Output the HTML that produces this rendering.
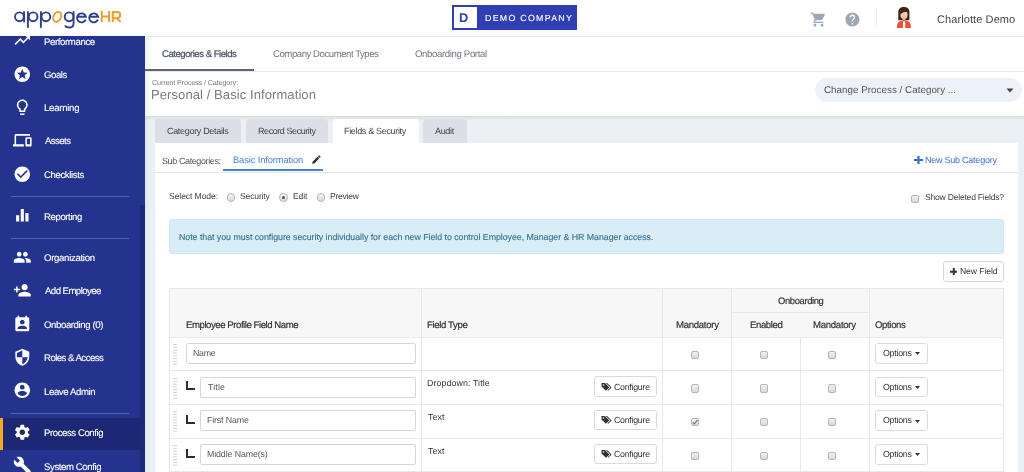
<!DOCTYPE html>
<html><head><meta charset="utf-8"><style>
html,body{margin:0;padding:0;width:1024px;height:472px;overflow:hidden;background:#fff;position:relative;font-family:"Liberation Sans", sans-serif;}
.t{position:absolute;white-space:nowrap;font-family:"Liberation Sans", sans-serif;text-rendering:geometricPrecision;will-change:transform;}
svg{display:block;}
</style></head><body>
<div style="position:absolute;left:0px;top:36px;width:145px;height:436px;background:#24348e;"></div>
<div style="position:absolute;left:140px;top:205px;width:5px;height:267px;background:#1c2a79;"></div>
<div style="position:absolute;left:0px;top:417.5px;width:140px;height:32.5px;background:#1c2873;"></div>
<div style="position:absolute;left:0px;top:417.5px;width:3px;height:32.5px;background:#f5a623;"></div>
<div style="position:absolute;left:11px;top:196px;width:118px;height:1px;background:#5263ad;"></div>
<div style="position:absolute;left:11px;top:238px;width:118px;height:1px;background:#5263ad;"></div>
<div style="position:absolute;left:11px;top:413px;width:118px;height:1px;background:#5263ad;"></div>
<svg style="position:absolute;left:13px;top:31.400000000000002px;" width="18.6" height="18.6" viewBox="0 0 24 24"><path fill="#fff" d="M16 6l2.29 2.29-4.88 4.88-4-4L2 16.59 3.41 18l6-6 4 4 6.3-6.29L22 12V6z"/></svg>
<div class="t" style="left:43.93px;top:37.75px;font-size:9.6px;line-height:9.6px;color:#fff;font-weight:400;letter-spacing:-0.376px;-webkit-text-stroke:0.12px #fff;">Performance</div>
<svg style="position:absolute;left:13px;top:64.5px;" width="18.6" height="18.6" viewBox="0 0 24 24"><path fill="#fff" d="M11.99 2C6.47 2 2 6.48 2 12s4.47 10 9.99 10C17.52 22 22 17.52 22 12S17.52 2 11.99 2zm4.24 16L12 15.45 7.77 18l1.12-4.81-3.73-3.23 4.92-.42L12 5l1.92 4.53 4.92.42-3.73 3.23L16.23 18z"/></svg>
<div class="t" style="left:44.22px;top:70.85px;font-size:9.6px;line-height:9.6px;color:#fff;font-weight:400;letter-spacing:-0.435px;-webkit-text-stroke:0.12px #fff;">Goals</div>
<svg style="position:absolute;left:13px;top:98.0px;" width="18.6" height="18.6" viewBox="0 0 24 24"><path fill="#fff" d="M9 21c0 .55.45 1 1 1h4c.55 0 1-.45 1-1v-1H9v1zm3-19C8.14 2 5 5.14 5 9c0 2.38 1.19 4.47 3 5.74V17c0 .55.45 1 1 1h6c.55 0 1-.45 1-1v-2.26c1.81-1.27 3-3.36 3-5.74 0-3.86-3.14-7-7-7zm2.85 11.1l-.85.6V16h-4v-2.3l-.85-.6C7.8 12.16 7 10.63 7 9c0-2.76 2.24-5 5-5s5 2.24 5 5c0 1.63-.8 3.16-2.15 4.1z"/></svg>
<div class="t" style="left:43.93px;top:104.35px;font-size:9.6px;line-height:9.6px;color:#fff;font-weight:400;letter-spacing:-0.265px;-webkit-text-stroke:0.12px #fff;">Learning</div>
<svg style="position:absolute;left:13px;top:131.0px;" width="18.6" height="18.6" viewBox="0 0 24 24"><path fill="#fff" d="M4 6h18V4H4c-1.1 0-2 .9-2 2v11H0v3h14v-3H4V6zm19 2h-6c-.55 0-1 .45-1 1v10c0 .55.45 1 1 1h6c.55 0 1-.45 1-1V9c0-.55-.45-1-1-1zm-1 9h-4v-7h4v7z"/></svg>
<div class="t" style="left:44.70px;top:137.35px;font-size:9.6px;line-height:9.6px;color:#fff;font-weight:400;letter-spacing:-0.573px;-webkit-text-stroke:0.12px #fff;">Assets</div>
<svg style="position:absolute;left:13px;top:164.5px;" width="18.6" height="18.6" viewBox="0 0 24 24"><path fill="#fff" d="M12 2C6.48 2 2 6.48 2 12s4.48 10 10 10 10-4.48 10-10S17.52 2 12 2zm-2 15l-5-5 1.41-1.41L10 14.17l7.59-7.59L19 8l-9 9z"/></svg>
<div class="t" style="left:44.22px;top:170.85px;font-size:9.6px;line-height:9.6px;color:#fff;font-weight:400;letter-spacing:-0.390px;-webkit-text-stroke:0.12px #fff;">Checklists</div>
<svg style="position:absolute;left:13px;top:206.2px;" width="18.6" height="18.6" viewBox="0 0 24 24"><path fill="#fff" d="M10 20h4V4h-4v16zm-6 0h4v-8H4v8zM16 9v11h4V9h-4z"/></svg>
<div class="t" style="left:43.93px;top:212.55px;font-size:9.6px;line-height:9.6px;color:#fff;font-weight:400;letter-spacing:-0.403px;-webkit-text-stroke:0.12px #fff;">Reporting</div>
<svg style="position:absolute;left:13px;top:247.7px;" width="18.6" height="18.6" viewBox="0 0 24 24"><path fill="#fff" d="M16 11c1.66 0 2.99-1.34 2.99-3S17.66 5 16 5c-1.66 0-3 1.34-3 3s1.34 3 3 3zm-8 0c1.66 0 2.99-1.34 2.99-3S9.66 5 8 5C6.34 5 5 6.34 5 8s1.34 3 3 3zm0 2c-2.33 0-7 1.17-7 3.5V19h14v-2.5c0-2.33-4.67-3.5-7-3.5zm8 0c-.29 0-.62.02-.97.05 1.16.84 1.97 1.97 1.97 3.45V19h6v-2.5c0-2.33-4.67-3.5-7-3.5z"/></svg>
<div class="t" style="left:44.27px;top:254.05px;font-size:9.6px;line-height:9.6px;color:#fff;font-weight:400;letter-spacing:-0.307px;-webkit-text-stroke:0.12px #fff;">Organization</div>
<svg style="position:absolute;left:13px;top:281.0px;" width="18.6" height="18.6" viewBox="0 0 24 24"><path fill="#fff" d="M15 12c2.21 0 4-1.79 4-4s-1.79-4-4-4-4 1.79-4 4 1.79 4 4 4zm-9-2V7H4v3H1v2h3v3h2v-3h3v-2H6zm9 4c-2.67 0-8 1.34-8 4v2h16v-2c0-2.66-5.33-4-8-4z"/></svg>
<div class="t" style="left:44.70px;top:287.35px;font-size:9.6px;line-height:9.6px;color:#fff;font-weight:400;letter-spacing:-0.547px;-webkit-text-stroke:0.12px #fff;">Add Employee</div>
<svg style="position:absolute;left:13px;top:314.5px;" width="18.6" height="18.6" viewBox="0 0 24 24"><path fill="#fff" d="M19 3h-1V1h-2v2H8V1H6v2H5c-1.11 0-2 .9-2 2v14c0 1.1.89 2 2 2h14c1.1 0 2-.9 2-2V5c0-1.1-.9-2-2-2zm-7 3c1.66 0 3 1.34 3 3s-1.34 3-3 3-3-1.34-3-3 1.34-3 3-3zm6 12H6v-1c0-2 4-3.1 6-3.1s6 1.1 6 3.1v1z"/></svg>
<div class="t" style="left:44.27px;top:320.85px;font-size:9.6px;line-height:9.6px;color:#fff;font-weight:400;letter-spacing:-0.396px;-webkit-text-stroke:0.12px #fff;">Onboarding (0)</div>
<svg style="position:absolute;left:13px;top:347.8px;" width="18.6" height="18.6" viewBox="0 0 24 24"><path fill="#fff" d="M12 1L3 5v6c0 5.55 3.84 10.74 9 12 5.16-1.26 9-6.45 9-12V5l-9-4zm0 10.99h7c-.53 4.12-3.28 7.79-7 8.94V12H5V6.3l7-3.11v8.8z"/></svg>
<div class="t" style="left:43.93px;top:354.15px;font-size:9.6px;line-height:9.6px;color:#fff;font-weight:400;letter-spacing:-0.528px;-webkit-text-stroke:0.12px #fff;">Roles &amp; Access</div>
<svg style="position:absolute;left:13px;top:381.3px;" width="18.6" height="18.6" viewBox="0 0 24 24"><path fill="#fff" d="M12 2C6.48 2 2 6.48 2 12s4.48 10 10 10 10-4.48 10-10S17.52 2 12 2zm0 3c1.66 0 3 1.34 3 3s-1.34 3-3 3-3-1.34-3-3 1.34-3 3-3zm0 14.2c-2.5 0-4.71-1.28-6-3.22.03-1.99 4-3.08 6-3.08 1.99 0 5.97 1.09 6 3.080-1.29 1.94-3.5 3.22-6 3.22z"/></svg>
<div class="t" style="left:43.93px;top:387.65px;font-size:9.6px;line-height:9.6px;color:#fff;font-weight:400;letter-spacing:-0.380px;-webkit-text-stroke:0.12px #fff;">Leave Admin</div>
<svg style="position:absolute;left:13px;top:422.8px;" width="18.6" height="18.6" viewBox="0 0 24 24"><path fill="#fff" d="M19.14 12.94c.04-.3.06-.61.06-.94 0-.32-.02-.64-.07-.94l2.03-1.58c.18-.14.23-.41.12-.61l-1.92-3.32c-.12-.22-.37-.29-.59-.22l-2.39.96c-.5-.38-1.03-.7-1.62-.94l-.36-2.54c-.04-.24-.24-.41-.48-.41h-3.84c-.24 0-.43.17-.47.41l-.36 2.54c-.59.24-1.13.57-1.62.94l-2.39-.96c-.22-.08-.47 0-.59.22L2.74 8.87c-.12.21-.08.47.12.61l2.03 1.58c-.05.3-.09.63-.09.94s.02.64.07.94l-2.03 1.58c-.18.14-.23.41-.12.61l1.92 3.32c.12.22.37.29.59.22l2.39-.96c.5.38 1.03.7 1.62.94l.36 2.54c.05.24.24.41.48.41h3.84c.24 0 .44-.17.47-.41l.36-2.54c.59-.24 1.13-.56 1.62-.94l2.39.96c.22.08.47 0 .59-.22l1.92-3.32c.12-.22.07-.47-.12-.61l-2.01-1.58zM12 15.6c-1.98 0-3.6-1.62-3.6-3.6s1.62-3.6 3.6-3.6 3.6 1.62 3.6 3.6-1.62 3.6-3.6 3.6z"/></svg>
<div class="t" style="left:43.93px;top:429.15px;font-size:9.6px;line-height:9.6px;color:#fff;font-weight:400;letter-spacing:-0.423px;-webkit-text-stroke:0.12px #fff;">Process Config</div>
<svg style="position:absolute;left:13px;top:456.2px;" width="18.6" height="18.6" viewBox="0 0 24 24"><path fill="#fff" d="M22.7 19l-9.1-9.1c.9-2.3.4-5-1.5-6.9-2-2-5-2.4-7.4-1.3L9 6 6 9 1.6 4.7C.4 7.1.9 10.1 2.9 12.1c1.9 1.9 4.6 2.4 6.9 1.5l9.1 9.1c.4.4 1 .4 1.4 0l2.3-2.3c.5-.4.5-1.1.1-1.4z"/></svg>
<div class="t" style="left:44.27px;top:462.55px;font-size:9.6px;line-height:9.6px;color:#fff;font-weight:400;letter-spacing:-0.404px;-webkit-text-stroke:0.12px #fff;">System Config</div>
<div style="position:absolute;left:0px;top:0px;width:1024px;height:36px;background:#fff;"></div>
<div style="position:absolute;left:145px;top:36px;width:879px;height:1px;background:#dfe5ee;"></div>
<div style="position:absolute;left:0px;top:30px;width:1024px;height:6px;background:linear-gradient(rgba(0,0,0,0),rgba(0,0,0,0.025));"></div>
<svg style="position:absolute;left:0px;top:0px;" width="130" height="36" viewBox="0 0 130 36">
<g fill="none" stroke="#2e3f8f" stroke-width="1.9">
<circle cx="19.45" cy="16.8" r="4.4"/><line x1="24.1" y1="11.3" x2="24.1" y2="22.4"/>
<circle cx="33.1" cy="16.8" r="4.4"/><line x1="27.9" y1="11.3" x2="27.9" y2="27.8"/>
<circle cx="45.9" cy="16.8" r="4.4"/><line x1="40.9" y1="11.3" x2="40.9" y2="27.8"/>
<circle cx="69.1" cy="16.8" r="4.4"/><path d="M73.6 11.3V23.2c0 3-1.9 4.3-4.5 4.3-2 0-3.4-.8-4.2-2.1"/>
<path d="M85.7 19.6a4.5 4.5 0 1 1 .2-2.8H77"/>
<path d="M97.9 19.6a4.5 4.5 0 1 1 .2-2.8H89.2"/>
</g>
<ellipse cx="57.2" cy="16.9" rx="3.7" ry="5.2" transform="rotate(28 57.2 16.9)" fill="none" stroke="#f39a2b" stroke-width="1.9"/>
</svg>
<svg style="position:absolute;left:0px;top:0px;" width="130" height="36" viewBox="0 0 130 36"><g fill="none" stroke="#f39a2b" stroke-width="2.0">
<path d="M101.7 11.05V21.9M109.1 11.05V21.9M101.7 16.5H109.1"/>
<path d="M112.8 21.9V12.05H116.9c2.1 0 3.3 1.3 3.3 3.05s-1.2 3.05-3.3 3.05H112.8M116.8 18.1L120.6 21.9"/>
</g></svg>
<div style="position:absolute;left:452px;top:5px;width:125px;height:25px;background:#2f3eb3;"></div>
<div style="position:absolute;left:453.5px;top:6.8px;width:23.5px;height:21.5px;background:#fff;"></div>
<div class="t" style="left:459.37px;top:12.01px;font-size:12.8px;line-height:12.8px;color:#2f3eb3;font-weight:700;letter-spacing:0.000px;">D</div>
<div class="t" style="left:485.00px;top:14.35px;font-size:8.8px;line-height:8.8px;color:#fff;font-weight:400;letter-spacing:1.290px;-webkit-text-stroke:0.12px #fff;">DEMO COMPANY</div>
<svg style="position:absolute;left:810.3px;top:10.6px;" width="17" height="17" viewBox="0 0 24 24"><path fill="#9ea8b5" d="M7 18c-1.1 0-1.99.9-1.99 2S5.9 22 7 22s2-.9 2-2-.9-2-2-2zM1 2v2h2l3.6 7.59-1.35 2.45c-.16.28-.25.61-.25.96 0 1.1.9 2 2 2h12v-2H7.42c-.14 0-.25-.11-.25-.25l.03-.12.9-1.63h7.45c.75 0 1.41-.41 1.75-1.03l3.58-6.49c.08-.14.12-.31.12-.48 0-.55-.45-1-1-1H5.21l-.94-2H1zm16 16c-1.1 0-1.99.9-1.99 2s.89 2 1.99 2 2-.9 2-2-.9-2-2-2z"/></svg>
<svg style="position:absolute;left:843.6px;top:11.2px;" width="16.8" height="16.8" viewBox="0 0 24 24"><path fill="#9ea8b5" d="M12 2C6.48 2 2 6.48 2 12s4.48 10 10 10 10-4.48 10-10S17.52 2 12 2zm1 17h-2v-2h2v2zm2.07-7.75l-.9.92C13.45 12.9 13 13.5 13 15h-2v-.5c0-1.1.45-2.1 1.17-2.83l1.24-1.26c.37-.36.59-.86.59-1.41 0-1.1-.9-2-2-2s-2 .9-2 2H8c0-2.21 1.79-4 4-4s4 1.79 4 4c0 .88-.36 1.68-.93 2.25z"/></svg>
<div style="position:absolute;left:876px;top:8px;width:1px;height:20px;background:#eef1f4;"></div>
<svg style="position:absolute;left:890px;top:3px;" width="30" height="29" viewBox="890 3 30 29">
<path d="M898.3 20.2V12.2C898.3 8.6 900.6 7 903.9 7S909.4 8.6 909.4 12.2V20.2Z" fill="#3d2318"/>
<ellipse cx="904" cy="14.8" rx="3.6" ry="4.3" fill="#f3c6ae"/>
<path d="M900.2 13.2C901 9.9 904 9.1 908.2 10.8L908.3 11.8C905.5 12 902.5 11.6 900.6 14.6Z" fill="#3d2318"/>
<rect x="902.7" y="18" width="2.6" height="3.2" fill="#e9b39a"/>
<path d="M896.8 28C896.8 22.6 898.8 20.6 904 20.2 909.2 20.6 910.9 22.6 910.9 28Z" fill="#e8533a"/>
<path d="M903 21.5h2.2V28H903Z" fill="#fff"/>
</svg>
<div class="t" style="left:936.65px;top:15.25px;font-size:11.0px;line-height:11.0px;color:#444;font-weight:400;letter-spacing:0.092px;">Charlotte Demo</div>
<div style="position:absolute;left:145px;top:37px;width:879px;height:35px;background:#fff;"></div>
<div style="position:absolute;left:145px;top:37px;width:8px;height:79px;background:linear-gradient(90deg,rgba(0,0,0,0.05),rgba(0,0,0,0));"></div>
<div class="t" style="left:162.22px;top:50.45px;font-size:9.6px;line-height:9.6px;color:#4b5567;font-weight:400;letter-spacing:-0.491px;-webkit-text-stroke:0.25px #4b5567;">Categories &amp; Fields</div>
<div class="t" style="left:272.92px;top:50.45px;font-size:9.6px;line-height:9.6px;color:#6f7580;font-weight:400;letter-spacing:-0.458px;">Company Document Types</div>
<div class="t" style="left:415.17px;top:50.45px;font-size:9.6px;line-height:9.6px;color:#6f7580;font-weight:400;letter-spacing:-0.359px;">Onboarding Portal</div>
<div style="position:absolute;left:145px;top:69.3px;width:109px;height:2px;background:#5b6478;"></div>
<div style="position:absolute;left:145px;top:71.3px;width:879px;height:1px;background:#e4e8ed;"></div>
<div class="t" style="left:151.64px;top:79.27px;font-size:7.2px;line-height:7.2px;color:#777;font-weight:400;letter-spacing:-0.123px;">Current Process / Category:</div>
<div class="t" style="left:150.96px;top:87.93px;font-size:13.0px;line-height:13.0px;color:#7b7b7b;font-weight:400;letter-spacing:0.086px;">Personal / Basic Information</div>
<div style="position:absolute;left:815px;top:78.3px;width:207px;height:24px;background:#edf1f8;border-radius:12px;"></div>
<div class="t" style="left:824.21px;top:86.13px;font-size:9.8px;line-height:9.8px;color:#555;font-weight:400;letter-spacing:0.029px;">Change Process / Category ...</div>
<svg style="position:absolute;left:1006px;top:88px;" width="8" height="5" viewBox="0 0 8 5"><path d="M0.5 0.5h7l-3.5 4z" fill="#444"/></svg>
<div style="position:absolute;left:145px;top:116px;width:879px;height:356px;background:#eaf0f3;"></div>
<div style="position:absolute;left:145px;top:116px;width:879px;height:5px;background:linear-gradient(#d5dde1,#dfe6e9 35%,#eaf0f3);"></div>
<div style="position:absolute;left:145px;top:116px;width:6px;height:356px;background:linear-gradient(90deg,rgba(0,0,0,0.04),rgba(0,0,0,0));"></div>
<div style="position:absolute;left:155px;top:119px;width:86px;height:24px;background:#dcdfe5;border-radius:4px 4px 0 0;"></div>
<div class="t" style="left:167.25px;top:127.34px;font-size:9.0px;line-height:9.0px;color:#444;font-weight:400;letter-spacing:-0.316px;">Category Details</div>
<div style="position:absolute;left:246px;top:119px;width:82px;height:24px;background:#dcdfe5;border-radius:4px 4px 0 0;"></div>
<div class="t" style="left:257.88px;top:127.34px;font-size:9.0px;line-height:9.0px;color:#444;font-weight:400;letter-spacing:-0.430px;">Record Security</div>
<div style="position:absolute;left:332.5px;top:119px;width:86.5px;height:24px;background:#fff;border-radius:4px 4px 0 0;"></div>
<div class="t" style="left:343.98px;top:127.34px;font-size:9.0px;line-height:9.0px;color:#444;font-weight:400;letter-spacing:-0.327px;">Fields &amp; Security</div>
<div style="position:absolute;left:423px;top:119px;width:44px;height:24px;background:#dcdfe5;border-radius:4px 4px 0 0;"></div>
<div class="t" style="left:435.00px;top:127.34px;font-size:9.0px;line-height:9.0px;color:#444;font-weight:400;letter-spacing:-0.332px;">Audit</div>
<div style="position:absolute;left:155px;top:143px;width:863px;height:329px;background:#fff;"></div>
<div class="t" style="left:162.00px;top:156.64px;font-size:9.0px;line-height:9.0px;color:#555;font-weight:400;letter-spacing:-0.394px;">Sub Categories:</div>
<div class="t" style="left:232.96px;top:156.14px;font-size:9.3px;line-height:9.3px;color:#3f80d8;font-weight:400;letter-spacing:-0.106px;">Basic Information</div>
<svg style="position:absolute;left:310.5px;top:154px;" width="11" height="11" viewBox="0 0 24 24"><path fill="#333" d="M3 17.25V21h3.75L17.81 9.94l-3.75-3.75L3 17.25zM20.71 7.04c.39-.39.39-1.02 0-1.41l-2.34-2.34c-.39-.39-1.02-.39-1.41 0l-1.83 1.83 3.75 3.75 1.83-1.83z"/></svg>
<div style="position:absolute;left:223px;top:169.3px;width:100px;height:2px;background:#3f82d6;"></div>
<svg style="position:absolute;left:914px;top:156px;" width="9" height="8" viewBox="0 0 9 8"><path d="M3.4 0h2.2v2.9H9v2.2H5.6V8H3.4V5.1H0V2.9h3.4z" fill="#3b6fd4"/></svg>
<div class="t" style="left:925.18px;top:155.94px;font-size:9.0px;line-height:9.0px;color:#3b6fd4;font-weight:400;letter-spacing:-0.242px;">New Sub Category</div>
<div style="position:absolute;left:155px;top:172px;width:863px;height:1px;background:#e6e6e6;"></div>
<div class="t" style="left:168.61px;top:191.97px;font-size:8.6px;line-height:8.6px;color:#444;font-weight:400;letter-spacing:-0.093px;">Select Mode:</div>
<div style="position:absolute;left:226.5px;top:193.4px;width:8.4px;height:8.4px;box-sizing:border-box;border:1px solid #b5b5b5;border-radius:50%;background:linear-gradient(#f4f4f4,#dcdcdc);"></div>
<div style="position:absolute;left:279.3px;top:193.4px;width:8.4px;height:8.4px;box-sizing:border-box;border:1px solid #b5b5b5;border-radius:50%;background:linear-gradient(#f4f4f4,#dcdcdc);"></div>
<div style="position:absolute;left:281.7px;top:195.79999999999998px;width:3.6px;height:3.6px;background:#555;border-radius:50%;"></div>
<div style="position:absolute;left:316.6px;top:193.4px;width:8.4px;height:8.4px;box-sizing:border-box;border:1px solid #b5b5b5;border-radius:50%;background:linear-gradient(#f4f4f4,#dcdcdc);"></div>
<div class="t" style="left:240.11px;top:192.07px;font-size:8.6px;line-height:8.6px;color:#444;font-weight:400;letter-spacing:-0.166px;">Security</div>
<div class="t" style="left:292.51px;top:192.07px;font-size:8.6px;line-height:8.6px;color:#444;font-weight:400;letter-spacing:-0.154px;">Edit</div>
<div class="t" style="left:329.81px;top:192.07px;font-size:8.6px;line-height:8.6px;color:#444;font-weight:400;letter-spacing:-0.271px;">Preview</div>
<div style="position:absolute;left:911.3px;top:195.0px;width:8.2px;height:8.2px;box-sizing:border-box;border:1px solid #b5b5b5;border-radius:2px;background:linear-gradient(#f0f0f0,#d9d9d9);"></div>
<div class="t" style="left:925.11px;top:193.47px;font-size:8.6px;line-height:8.6px;color:#444;font-weight:400;letter-spacing:-0.234px;">Show Deleted Fields?</div>
<div style="position:absolute;left:169px;top:219.3px;width:835px;height:34.7px;box-sizing:border-box;background:#d9edf7;border:1px solid #cfe7f3;border-radius:3px;"></div>
<div class="t" style="left:179.10px;top:233.15px;font-size:8.8px;line-height:8.8px;color:#31708f;font-weight:400;letter-spacing:-0.028px;-webkit-text-stroke:0.1px #31708f;">Note that you must configure security individually for each new Field to control Employee, Manager &amp; HR Manager access.</div>
<div style="position:absolute;left:942.5px;top:261.4px;width:61.1px;height:20.4px;box-sizing:border-box;border:1px solid #d5d5d5;border-radius:3px;background:#fff;"></div>
<svg style="position:absolute;left:949.7px;top:267.5px;" width="7.6" height="7.4" viewBox="0 0 7.6 7.4"><path d="M2.8 0h2v2.7h2.8v2H4.8v2.7h-2V4.7H0v-2h2.8z" fill="#333"/></svg>
<div class="t" style="left:960.21px;top:267.27px;font-size:8.6px;line-height:8.6px;color:#333;font-weight:400;letter-spacing:-0.085px;">New Field</div>
<div style="position:absolute;left:169px;top:288px;width:835px;height:184px;box-sizing:border-box;border:1px solid #e8e8e8;border-bottom:none;background:#fff;"></div>
<div style="position:absolute;left:170px;top:289px;width:833px;height:48px;background:#f7f7f7;"></div>
<div style="position:absolute;left:421px;top:288px;width:1px;height:184px;background:#e8e8e8;"></div>
<div style="position:absolute;left:662px;top:288px;width:1px;height:184px;background:#e8e8e8;"></div>
<div style="position:absolute;left:731px;top:288px;width:1px;height:184px;background:#e8e8e8;"></div>
<div style="position:absolute;left:869px;top:288px;width:1px;height:184px;background:#e8e8e8;"></div>
<div style="position:absolute;left:800px;top:337px;width:1px;height:135px;background:#e8e8e8;"></div>
<div style="position:absolute;left:731px;top:312px;width:138px;height:1px;background:#e8e8e8;"></div>
<div style="position:absolute;left:169px;top:337px;width:835px;height:1px;background:#e8e8e8;"></div>
<div style="position:absolute;left:169px;top:370px;width:835px;height:1px;background:#e8e8e8;"></div>
<div style="position:absolute;left:169px;top:404px;width:835px;height:1px;background:#e8e8e8;"></div>
<div style="position:absolute;left:169px;top:438px;width:835px;height:1px;background:#e8e8e8;"></div>
<div style="position:absolute;left:169px;top:471px;width:835px;height:1px;background:#e8e8e8;"></div>
<div class="t" style="left:185.73px;top:320.95px;font-size:9.6px;line-height:9.6px;color:#333;font-weight:400;letter-spacing:-0.447px;-webkit-text-stroke:0.2px #333;">Employee Profile Field Name</div>
<div class="t" style="left:427.43px;top:320.95px;font-size:9.6px;line-height:9.6px;color:#333;font-weight:400;letter-spacing:-0.368px;-webkit-text-stroke:0.2px #333;">Field Type</div>
<div class="t" style="left:675.83px;top:320.95px;font-size:9.6px;line-height:9.6px;color:#333;font-weight:400;letter-spacing:-0.299px;-webkit-text-stroke:0.2px #333;">Mandatory</div>
<div class="t" style="left:749.73px;top:320.95px;font-size:9.6px;line-height:9.6px;color:#333;font-weight:400;letter-spacing:-0.407px;-webkit-text-stroke:0.2px #333;">Enabled</div>
<div class="t" style="left:813.23px;top:320.95px;font-size:9.6px;line-height:9.6px;color:#333;font-weight:400;letter-spacing:-0.286px;-webkit-text-stroke:0.2px #333;">Mandatory</div>
<div class="t" style="left:875.47px;top:320.95px;font-size:9.6px;line-height:9.6px;color:#333;font-weight:400;letter-spacing:-0.367px;-webkit-text-stroke:0.2px #333;">Options</div>
<div class="t" style="left:777.88px;top:295.83px;font-size:9.4px;line-height:9.4px;color:#333;font-weight:400;letter-spacing:-0.353px;-webkit-text-stroke:0.2px #333;">Onboarding</div>
<svg style="position:absolute;left:173px;top:343.9px;" width="4" height="22" viewBox="0 0 4 22"><rect x="0" y="0.00" width="4" height="1.1" fill="#d4d4d4"/><rect x="0" y="2.80" width="4" height="1.1" fill="#d4d4d4"/><rect x="0" y="5.60" width="4" height="1.1" fill="#d4d4d4"/><rect x="0" y="8.40" width="4" height="1.1" fill="#d4d4d4"/><rect x="0" y="11.20" width="4" height="1.1" fill="#d4d4d4"/><rect x="0" y="14.00" width="4" height="1.1" fill="#d4d4d4"/><rect x="0" y="16.80" width="4" height="1.1" fill="#d4d4d4"/><rect x="0" y="19.60" width="4" height="1.1" fill="#d4d4d4"/></svg>
<div style="position:absolute;left:186px;top:343px;width:229.5px;height:21.19999999999999px;box-sizing:border-box;border:1px solid #d6d6d6;border-radius:2px;background:#fff;"></div>
<div class="t" style="left:193.00px;top:348.95px;font-size:8.8px;line-height:8.8px;color:#555;font-weight:400;letter-spacing:-0.251px;">Name</div>
<div style="position:absolute;left:690.8px;top:350.7px;width:8.2px;height:8.2px;box-sizing:border-box;border:1px solid #b5b5b5;border-radius:2px;background:linear-gradient(#f0f0f0,#d9d9d9);"></div>
<div style="position:absolute;left:759.5px;top:350.7px;width:8.2px;height:8.2px;box-sizing:border-box;border:1px solid #b5b5b5;border-radius:2px;background:linear-gradient(#f0f0f0,#d9d9d9);"></div>
<div style="position:absolute;left:828.3px;top:350.7px;width:8.2px;height:8.2px;box-sizing:border-box;border:1px solid #b5b5b5;border-radius:2px;background:linear-gradient(#f0f0f0,#d9d9d9);"></div>
<div style="position:absolute;left:875.3px;top:343px;width:52.5px;height:20.80000000000001px;box-sizing:border-box;border:1px solid #dadada;border-radius:3px;background:#fff;"></div>
<div class="t" style="left:882.90px;top:348.95px;font-size:8.8px;line-height:8.8px;color:#333;font-weight:400;letter-spacing:-0.235px;">Options</div>
<svg style="position:absolute;left:914.8px;top:352.2px;" width="5.0" height="3.0" viewBox="0 0 5.5 3.2"><path d="M0 0h5.5L2.75 3.2z" fill="#333"/></svg>
<svg style="position:absolute;left:173px;top:377.59999999999997px;" width="4" height="22" viewBox="0 0 4 22"><rect x="0" y="0.00" width="4" height="1.1" fill="#d4d4d4"/><rect x="0" y="2.80" width="4" height="1.1" fill="#d4d4d4"/><rect x="0" y="5.60" width="4" height="1.1" fill="#d4d4d4"/><rect x="0" y="8.40" width="4" height="1.1" fill="#d4d4d4"/><rect x="0" y="11.20" width="4" height="1.1" fill="#d4d4d4"/><rect x="0" y="14.00" width="4" height="1.1" fill="#d4d4d4"/><rect x="0" y="16.80" width="4" height="1.1" fill="#d4d4d4"/><rect x="0" y="19.60" width="4" height="1.1" fill="#d4d4d4"/></svg>
<div style="position:absolute;left:186px;top:381.4px;width:7.3px;height:7px;border-left:2px solid #2e2e2e;border-bottom:2px solid #2e2e2e;"></div>
<div style="position:absolute;left:200px;top:376.7px;width:215.5px;height:21.19999999999999px;box-sizing:border-box;border:1px solid #d6d6d6;border-radius:2px;background:#fff;"></div>
<div class="t" style="left:207.52px;top:382.65px;font-size:8.8px;line-height:8.8px;color:#555;font-weight:400;letter-spacing:0.148px;">Title</div>
<div class="t" style="left:427.10px;top:379.45px;font-size:8.8px;line-height:8.8px;color:#333;font-weight:400;letter-spacing:0.113px;">Dropdown: Title</div>
<div style="position:absolute;left:594.1px;top:376.4px;width:62.60000000000002px;height:20.30000000000001px;box-sizing:border-box;border:1px solid #dadada;border-radius:3px;background:#fff;"></div>
<svg style="position:absolute;left:601.2px;top:381.59999999999997px;" width="11.2" height="10.2" viewBox="0 0 10 10"><path d="M0 1v3.3l4.4 4.4 3.3-3.3L3.3 1z" fill="#333"/><circle cx="1.9" cy="2.9" r="0.8" fill="#fff"/><path d="M4.3 1h1.2l4.4 4.4-3.3 3.3-.6-.6 2.7-2.7z" fill="#333"/></svg>
<div class="t" style="left:614.16px;top:382.75px;font-size:8.8px;line-height:8.8px;color:#333;font-weight:400;letter-spacing:-0.264px;">Configure</div>
<div style="position:absolute;left:690.8px;top:384.4px;width:8.2px;height:8.2px;box-sizing:border-box;border:1px solid #b5b5b5;border-radius:2px;background:linear-gradient(#f0f0f0,#d9d9d9);"></div>
<div style="position:absolute;left:759.5px;top:384.4px;width:8.2px;height:8.2px;box-sizing:border-box;border:1px solid #b5b5b5;border-radius:2px;background:linear-gradient(#f0f0f0,#d9d9d9);"></div>
<div style="position:absolute;left:828.3px;top:384.4px;width:8.2px;height:8.2px;box-sizing:border-box;border:1px solid #b5b5b5;border-radius:2px;background:linear-gradient(#f0f0f0,#d9d9d9);"></div>
<div style="position:absolute;left:875.3px;top:376.7px;width:52.5px;height:20.80000000000001px;box-sizing:border-box;border:1px solid #dadada;border-radius:3px;background:#fff;"></div>
<div class="t" style="left:882.90px;top:382.65px;font-size:8.8px;line-height:8.8px;color:#333;font-weight:400;letter-spacing:-0.235px;">Options</div>
<svg style="position:absolute;left:914.8px;top:385.9px;" width="5.0" height="3.0" viewBox="0 0 5.5 3.2"><path d="M0 0h5.5L2.75 3.2z" fill="#333"/></svg>
<svg style="position:absolute;left:173px;top:411.2px;" width="4" height="22" viewBox="0 0 4 22"><rect x="0" y="0.00" width="4" height="1.1" fill="#d4d4d4"/><rect x="0" y="2.80" width="4" height="1.1" fill="#d4d4d4"/><rect x="0" y="5.60" width="4" height="1.1" fill="#d4d4d4"/><rect x="0" y="8.40" width="4" height="1.1" fill="#d4d4d4"/><rect x="0" y="11.20" width="4" height="1.1" fill="#d4d4d4"/><rect x="0" y="14.00" width="4" height="1.1" fill="#d4d4d4"/><rect x="0" y="16.80" width="4" height="1.1" fill="#d4d4d4"/><rect x="0" y="19.60" width="4" height="1.1" fill="#d4d4d4"/></svg>
<div style="position:absolute;left:186px;top:415.0px;width:7.3px;height:7px;border-left:2px solid #2e2e2e;border-bottom:2px solid #2e2e2e;"></div>
<div style="position:absolute;left:200px;top:410.3px;width:215.5px;height:21.19999999999999px;box-sizing:border-box;border:1px solid #d6d6d6;border-radius:2px;background:#fff;"></div>
<div class="t" style="left:207.00px;top:416.25px;font-size:8.8px;line-height:8.8px;color:#555;font-weight:400;letter-spacing:-0.137px;">First Name</div>
<div class="t" style="left:427.62px;top:413.05px;font-size:8.8px;line-height:8.8px;color:#333;font-weight:400;letter-spacing:0.072px;">Text</div>
<div style="position:absolute;left:594.1px;top:410.0px;width:62.60000000000002px;height:20.30000000000001px;box-sizing:border-box;border:1px solid #dadada;border-radius:3px;background:#fff;"></div>
<svg style="position:absolute;left:601.2px;top:415.2px;" width="11.2" height="10.2" viewBox="0 0 10 10"><path d="M0 1v3.3l4.4 4.4 3.3-3.3L3.3 1z" fill="#333"/><circle cx="1.9" cy="2.9" r="0.8" fill="#fff"/><path d="M4.3 1h1.2l4.4 4.4-3.3 3.3-.6-.6 2.7-2.7z" fill="#333"/></svg>
<div class="t" style="left:614.16px;top:416.35px;font-size:8.8px;line-height:8.8px;color:#333;font-weight:400;letter-spacing:-0.264px;">Configure</div>
<div style="position:absolute;left:690.8px;top:418.0px;width:8.2px;height:8.2px;box-sizing:border-box;border:1px solid #b5b5b5;border-radius:2px;background:linear-gradient(#f0f0f0,#d9d9d9);"></div>
<svg style="position:absolute;left:691.8px;top:419.0px;" width="6" height="6" viewBox="0 0 6 6"><path d="M0.8 3.2l1.6 1.7 3-4" stroke="#777" stroke-width="1.1" fill="none"/></svg>
<div style="position:absolute;left:759.5px;top:418.0px;width:8.2px;height:8.2px;box-sizing:border-box;border:1px solid #b5b5b5;border-radius:2px;background:linear-gradient(#f0f0f0,#d9d9d9);"></div>
<div style="position:absolute;left:828.3px;top:418.0px;width:8.2px;height:8.2px;box-sizing:border-box;border:1px solid #b5b5b5;border-radius:2px;background:linear-gradient(#f0f0f0,#d9d9d9);"></div>
<div style="position:absolute;left:875.3px;top:410.3px;width:52.5px;height:20.80000000000001px;box-sizing:border-box;border:1px solid #dadada;border-radius:3px;background:#fff;"></div>
<div class="t" style="left:882.90px;top:416.25px;font-size:8.8px;line-height:8.8px;color:#333;font-weight:400;letter-spacing:-0.235px;">Options</div>
<svg style="position:absolute;left:914.8px;top:419.5px;" width="5.0" height="3.0" viewBox="0 0 5.5 3.2"><path d="M0 0h5.5L2.75 3.2z" fill="#333"/></svg>
<svg style="position:absolute;left:173px;top:444.9px;" width="4" height="22" viewBox="0 0 4 22"><rect x="0" y="0.00" width="4" height="1.1" fill="#d4d4d4"/><rect x="0" y="2.80" width="4" height="1.1" fill="#d4d4d4"/><rect x="0" y="5.60" width="4" height="1.1" fill="#d4d4d4"/><rect x="0" y="8.40" width="4" height="1.1" fill="#d4d4d4"/><rect x="0" y="11.20" width="4" height="1.1" fill="#d4d4d4"/><rect x="0" y="14.00" width="4" height="1.1" fill="#d4d4d4"/><rect x="0" y="16.80" width="4" height="1.1" fill="#d4d4d4"/><rect x="0" y="19.60" width="4" height="1.1" fill="#d4d4d4"/></svg>
<div style="position:absolute;left:186px;top:448.7px;width:7.3px;height:7px;border-left:2px solid #2e2e2e;border-bottom:2px solid #2e2e2e;"></div>
<div style="position:absolute;left:200px;top:444.0px;width:215.5px;height:21.19999999999999px;box-sizing:border-box;border:1px solid #d6d6d6;border-radius:2px;background:#fff;"></div>
<div class="t" style="left:207.00px;top:449.95px;font-size:8.8px;line-height:8.8px;color:#555;font-weight:400;letter-spacing:-0.104px;">Middle Name(s)</div>
<div class="t" style="left:427.62px;top:446.75px;font-size:8.8px;line-height:8.8px;color:#333;font-weight:400;letter-spacing:0.072px;">Text</div>
<div style="position:absolute;left:594.1px;top:443.7px;width:62.60000000000002px;height:20.30000000000001px;box-sizing:border-box;border:1px solid #dadada;border-radius:3px;background:#fff;"></div>
<svg style="position:absolute;left:601.2px;top:448.9px;" width="11.2" height="10.2" viewBox="0 0 10 10"><path d="M0 1v3.3l4.4 4.4 3.3-3.3L3.3 1z" fill="#333"/><circle cx="1.9" cy="2.9" r="0.8" fill="#fff"/><path d="M4.3 1h1.2l4.4 4.4-3.3 3.3-.6-.6 2.7-2.7z" fill="#333"/></svg>
<div class="t" style="left:614.16px;top:450.05px;font-size:8.8px;line-height:8.8px;color:#333;font-weight:400;letter-spacing:-0.264px;">Configure</div>
<div style="position:absolute;left:690.8px;top:451.7px;width:8.2px;height:8.2px;box-sizing:border-box;border:1px solid #b5b5b5;border-radius:2px;background:linear-gradient(#f0f0f0,#d9d9d9);"></div>
<div style="position:absolute;left:759.5px;top:451.7px;width:8.2px;height:8.2px;box-sizing:border-box;border:1px solid #b5b5b5;border-radius:2px;background:linear-gradient(#f0f0f0,#d9d9d9);"></div>
<div style="position:absolute;left:828.3px;top:451.7px;width:8.2px;height:8.2px;box-sizing:border-box;border:1px solid #b5b5b5;border-radius:2px;background:linear-gradient(#f0f0f0,#d9d9d9);"></div>
<div style="position:absolute;left:875.3px;top:444.0px;width:52.5px;height:20.80000000000001px;box-sizing:border-box;border:1px solid #dadada;border-radius:3px;background:#fff;"></div>
<div class="t" style="left:882.90px;top:449.95px;font-size:8.8px;line-height:8.8px;color:#333;font-weight:400;letter-spacing:-0.235px;">Options</div>
<svg style="position:absolute;left:914.8px;top:453.2px;" width="5.0" height="3.0" viewBox="0 0 5.5 3.2"><path d="M0 0h5.5L2.75 3.2z" fill="#333"/></svg>
</body></html>
